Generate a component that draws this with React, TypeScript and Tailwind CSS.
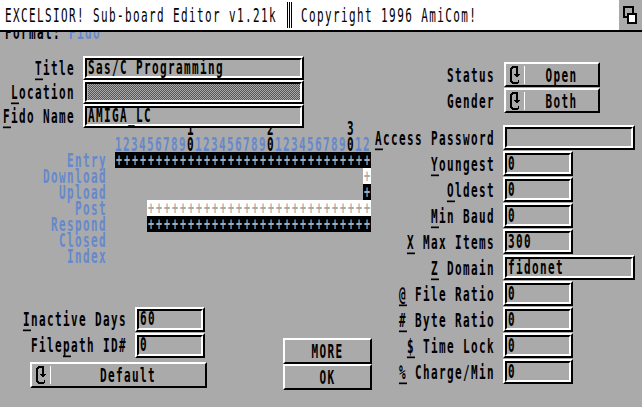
const mono = "font-['DejaVu_Sans_Mono','Liberation_Mono',monospace] text-[11px] tracking-[1.38px] leading-[16px]";

const digits = "12345678901234567890123456789012".split("");
const tens = ["1", "2", "3"];

const rows = [
  { label: "Entry", indent: "ml-0", count: 32, tone: "bg-black" },
  { label: "Download", indent: "ml-[248px]", count: 1, tone: "bg-white" },
  { label: "Upload", indent: "ml-[248px]", count: 1, tone: "bg-black" },
  { label: "Post", indent: "ml-[32px]", count: 28, tone: "bg-white" },
  { label: "Respond", indent: "ml-[32px]", count: 28, tone: "bg-black" },
  { label: "Closed", indent: "ml-0", count: 0, tone: "" },
  { label: "Index", indent: "ml-0", count: 0, tone: "" },
];

const rightFields = [
  { key_: "A", post: "ccess Password", value: "", wide: true },
  { key_: "Y", post: "oungest", value: "0" },
  { key_: "O", post: "ldest", value: "0" },
  { key_: "M", post: "in Baud", value: "0" },
  { key_: "X", post: " Max Items", value: "300" },
  { key_: "Z", post: " Domain", value: "fidonet", wide: true },
  { key_: "@", post: " File Ratio", value: "0" },
  { key_: "#", post: " Byte Ratio", value: "0" },
  { key_: "$", post: " Time Lock", value: "0" },
  { key_: "%", post: " Charge/Min", value: "0" },
];

function T({ children, className = "" }: { children: React.ReactNode; className?: string }) {
  return <span className={`inline-block origin-center translate-y-[2px] scale-y-[1.7] whitespace-pre font-bold ${className}`}>{children}</span>;
}

function Label({ pre = "", k, post }: { pre?: string; k: string; post: string }) {
  return (
    <T>
      {pre}
      <span className="underline decoration-1 underline-offset-2">{k}</span>
      {post}
    </T>
  );
}

function Raised({ className = "", children }: { className?: string; children?: React.ReactNode }) {
  return (
    <div className={`border-2 border-t-white border-l-white border-r-black border-b-black ${className}`}>{children}</div>
  );
}

// string gadget: raised outer ring, recessed inner ring
function Field({ className = "", value = "", dither = false }: { className?: string; value?: string; dither?: boolean }) {
  return (
    <Raised className={`relative z-10 bg-[#aaaaaa] ${className}`}>
      <div className="flex h-full items-center border-2 border-t-black border-l-black border-r-white border-b-white pl-px">
        {dither ? (
          <div className="h-full w-full bg-[repeating-conic-gradient(#555555_0_25%,#aaaaaa_0_50%)] bg-[length:2px_2px]" />
        ) : (
          <T className="!translate-y-px">{value}</T>
        )}
      </div>
    </Raised>
  );
}

function CycleIcon() {
  return (
    <svg width="10" height="18" viewBox="0 0 10 18" shapeRendering="crispEdges" className="shrink-0">
      <path fill="#000" d="M2 0h6v2H3v1H2v12h1v1h5v2H2v-1H1v-1H0V2h1V1h1z" />
      <path fill="#000" d="M6 2h2v6h2v1H9v1H8v1H6v-1H5V9H4V8h2z" />
      <path fill="#000" d="M8 14h1v3H8z" />
    </svg>
  );
}

function Cycle({ label, className = "" }: { label: string; className?: string }) {
  return (
    <Raised className={`flex items-center ${className}`}>
      <div className="ml-[4px] flex w-[13px]">
        <CycleIcon />
      </div>
      <div className="ml-px h-[18px] w-px bg-white" />
      <div className="flex-1 text-center">
        <T>{label}</T>
      </div>
    </Raised>
  );
}

function Button({ label }: { label: string }) {
  return (
    <Raised className="flex h-[26px] items-center justify-center">
      <T>{label}</T>
    </Raised>
  );
}

export default function App() {
  return (
    <div className={`h-[407px] w-[642px] overflow-hidden bg-[#aaaaaa] text-black ${mono}`}>
      {/* title bar */}
      <div className="relative z-20 flex h-[32px] border-b-2 border-black bg-white">
        <div className="flex flex-1 items-center pl-[5px]">
          <T className="!font-normal">EXCELSIOR! Sub-board Editor v1.21k </T>
          <span className="ml-[2px] mr-px h-[26px] w-[5px] bg-[repeating-linear-gradient(90deg,#000_0_1px,#fff_1px_2px)]" />
          <T className="!font-normal"> Copyright 1996 AmiCom!</T>
        </div>
        <div className="flex w-[23px] flex-col bg-[#aaaaaa] pl-[4px] pt-[6px]">
          <div className="h-[12px] w-[11px] border-2 border-black" />
          <div className="-mt-[5px] ml-[4px] h-[11px] w-[10px] border-2 border-black bg-white" />
        </div>
      </div>

      <div className="flex">
        {/* left column */}
        <div className="w-[372px] shrink-0">
          <div className="-mt-[8px] h-[16px] pl-[5px]">
            <T>
              Format: <span className="text-[#6688cc]">Fido</span>
            </T>
          </div>

          <div className="mt-[16px] flex flex-col">
            {[
              { k: "T", post: "itle", value: "Sas/C Programming" },
              { k: "L", post: "ocation", dither: true },
              { k: "F", post: "ido Name", value: "AMIGA_LC" },
            ].map((f) => (
              <div key={f.k} className="flex h-[24px] items-center">
                <div className="w-[75px] text-right">
                  <Label k={f.k} post={f.post} />
                </div>
                <Field className="ml-[8px] h-[24px] w-[221px]" value={f.value} dither={f.dither} />
              </div>
            ))}
          </div>

          {/* ruler */}
          <div className="relative -mt-[8px] ml-[115px] w-[256px]">
            <div className="grid h-[16px] grid-cols-[repeat(32,8px)]">
              {tens.map((t, i) => (
                <div key={t} className={i === 0 ? "col-start-10" : i === 1 ? "col-start-20" : "col-start-30"}>
                  <T>{t}</T>
                </div>
              ))}
            </div>
            <div className="grid h-[16px] grid-cols-[repeat(32,8px)]">
              {digits.map((d, i) => (
                <T key={i} className={d === "0" ? "" : "text-[#6688cc]"}>
                  {d}
                </T>
              ))}
            </div>
          </div>

          {/* flag rows */}
          <div className="flex flex-col">
            {rows.map((r) => (
              <div key={r.label} className="flex h-[16px]">
                <div className="w-[107px] text-right text-[#6688cc]">
                  <T>{r.label}</T>
                </div>
                <div className="ml-[8px] w-[256px]">
                  {r.count > 0 && (
                    <div className={`flex h-[16px] pl-px ${r.indent} ${r.tone} text-[#aaaaaa]`}>
                      <T className="!translate-y-px !scale-y-[1.75] text-[10px] tracking-[1.98px]">{"+".repeat(r.count)}</T>
                    </div>
                  )}
                </div>
              </div>
            ))}
          </div>

          {/* bottom left */}
          <div className="mt-[42px] flex">
            <div className="w-[207px] shrink-0">
              <div className="flex h-[26px] items-center">
                <div className="w-[127px] text-right">
                  <Label k="I" post="nactive Days" />
                </div>
                <Field className="ml-[8px] h-[25px] w-[70px]" value="60" />
              </div>
              <div className="flex h-[26px] items-center">
                <div className="w-[127px] text-right">
                  <Label pre="File" k="p" post="ath ID#" />
                </div>
                <Field className="ml-[8px] h-[25px] w-[70px]" value="0" />
              </div>
              <div className="ml-[30px] mt-[4px]">
                <Cycle label="Default" className="h-[26px] w-[177px]" />
              </div>
            </div>
            <div className="ml-[76px] mt-[32px] w-[89px]">
              <Button label="MORE" />
              <Button label="OK" />
            </div>
          </div>
        </div>

        {/* right column */}
        <div className="flex-1 pt-[30px]">
          {["Status", "Gender"].map((label, i) => (
            <div key={label} className="mb-px flex h-[25px] items-center">
              <div className="w-[123px] text-right">
                <T>{label}</T>
              </div>
              <Cycle label={i === 0 ? "Open" : "Both"} className="ml-[9px] h-[25px] w-[96px]" />
            </div>
          ))}
          <div className="mt-[12px] flex flex-col gap-px">
            {rightFields.map((f) => (
              <div key={f.key_} className="flex h-[25px] items-center">
                <div className="w-[123px] text-right">
                  <Label k={f.key_} post={f.post} />
                </div>
                <Field className={`ml-[8px] h-[25px] ${f.wide ? "w-[132px]" : "w-[70px]"}`} value={f.value} />
              </div>
            ))}
          </div>
        </div>
      </div>
    </div>
  );
}
